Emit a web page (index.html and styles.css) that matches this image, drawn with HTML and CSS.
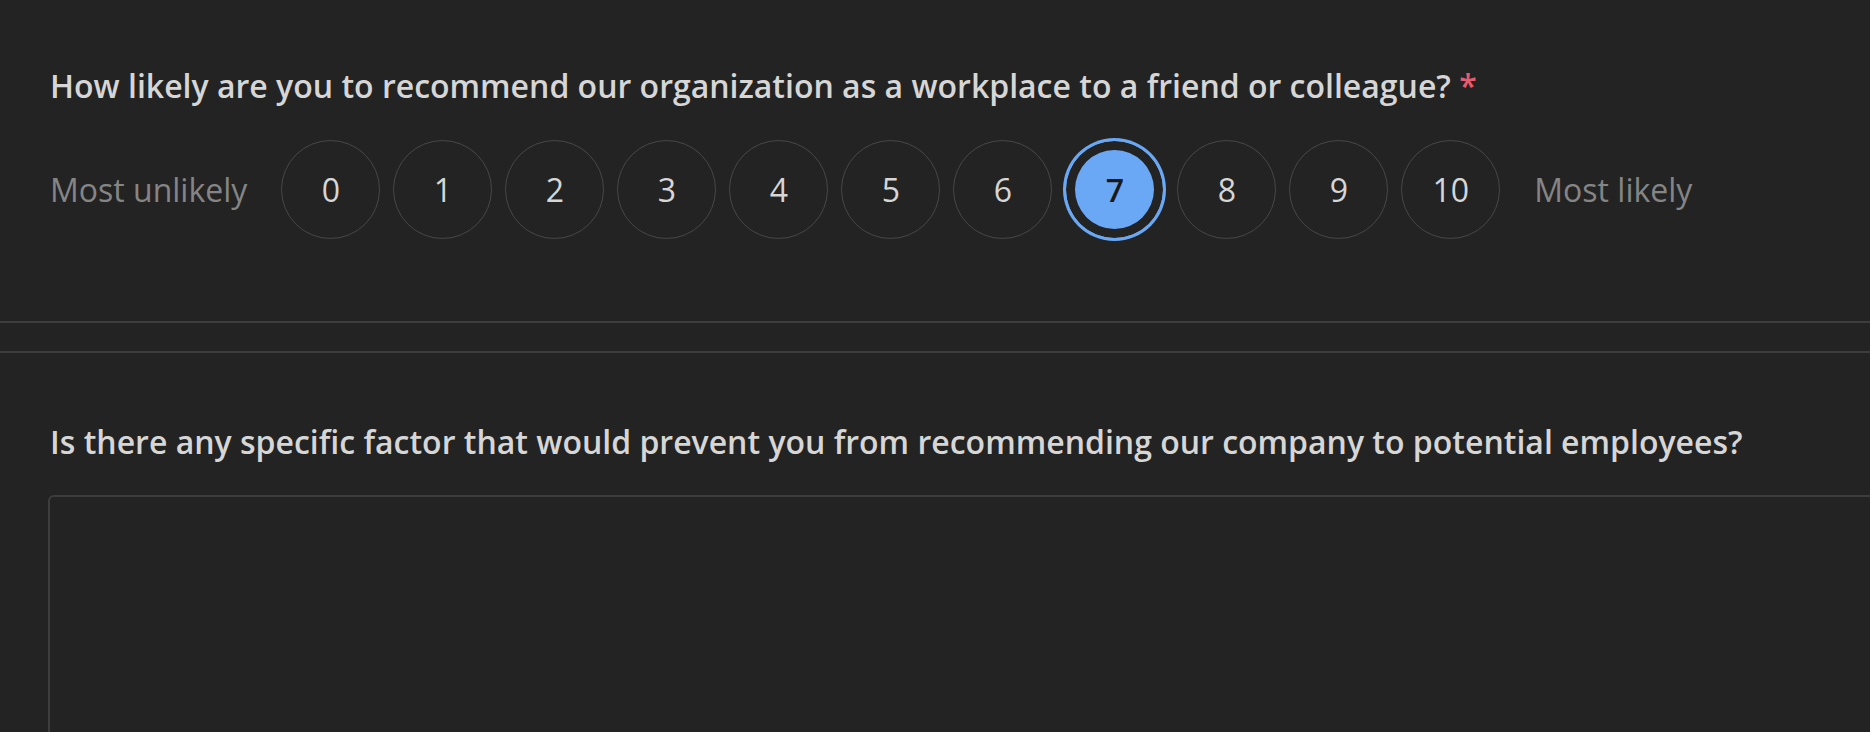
FILE: index.html
```html
<!DOCTYPE html>
<html lang="en">
<head>
<meta charset="utf-8">
<title>Survey</title>
<link rel="stylesheet" href="styles.css">
</head>
<body>
<div class="page">
  <section class="question q-nps">
    <div class="q-title">How likely are you to recommend our organization as a workplace to a friend or colleague? <span class="req">*</span></div>
    <div class="scale">
      <span class="scale-label">Most unlikely</span>
      <div class="options">
        <button class="opt">0</button>
        <button class="opt">1</button>
        <button class="opt">2</button>
        <button class="opt">3</button>
        <button class="opt">4</button>
        <button class="opt">5</button>
        <button class="opt">6</button>
        <button class="opt selected">7</button>
        <button class="opt">8</button>
        <button class="opt">9</button>
        <button class="opt">10</button>
      </div>
      <span class="scale-label">Most likely</span>
    </div>
  </section>
  <section class="question q-text">
    <div class="q-title">Is there any specific factor that would prevent you from recommending our company to potential employees?</div>
    <div class="textarea"></div>
  </section>
</div>
</body>
</html>
```

FILE: styles.css
```css
html, body {
  margin: 0;
  padding: 0;
  background: #232323;
  overflow: hidden;
}
body {
  font-family: "Open Sans", "Noto Sans", sans-serif;
  color: #d6d6d6;
}
.page {
  width: 2100px;
}
.question {
  padding-left: 50px;
}
.q-nps {
  padding-top: 66px;
  padding-bottom: 82px;
  border-bottom: 2px solid #3d3d3d;
}
.q-text {
  margin-top: 28px;
  border-top: 2px solid #3d3d3d;
  padding-top: 69px;
}
.q-title {
  font-size: 32px;
  line-height: 40px;
  font-weight: 600;
  color: #d6d6d6;
}
.req {
  color: #e85a6e;
}
.scale {
  margin-top: 34px;
  display: flex;
  align-items: center;
  gap: 34px;
}
.scale-label {
  font-size: 32px;
  color: #858585;
}
.options {
  display: flex;
  gap: 13px;
}
.opt {
  width: 99px;
  height: 99px;
  border-radius: 50%;
  border: 1px solid #474747;
  background: transparent;
  color: #d6d6d6;
  font-family: "Open Sans", "Noto Sans", sans-serif;
  font-size: 32px;
  padding: 0;
  display: flex;
  align-items: center;
  justify-content: center;
}
.opt.selected {
  border-color: #6aa8f5;
  background: #6aa8f5;
  box-shadow: 0 0 0 2px #6aa8f5, inset 0 0 0 9px #232323;
  color: #1a1a1a;
  font-weight: 600;
}
.textarea {
  margin-top: 33px;
  margin-left: -2px;
  height: 400px;
  border: 2px solid #3d3d3d;
  border-radius: 6px;
}
```
